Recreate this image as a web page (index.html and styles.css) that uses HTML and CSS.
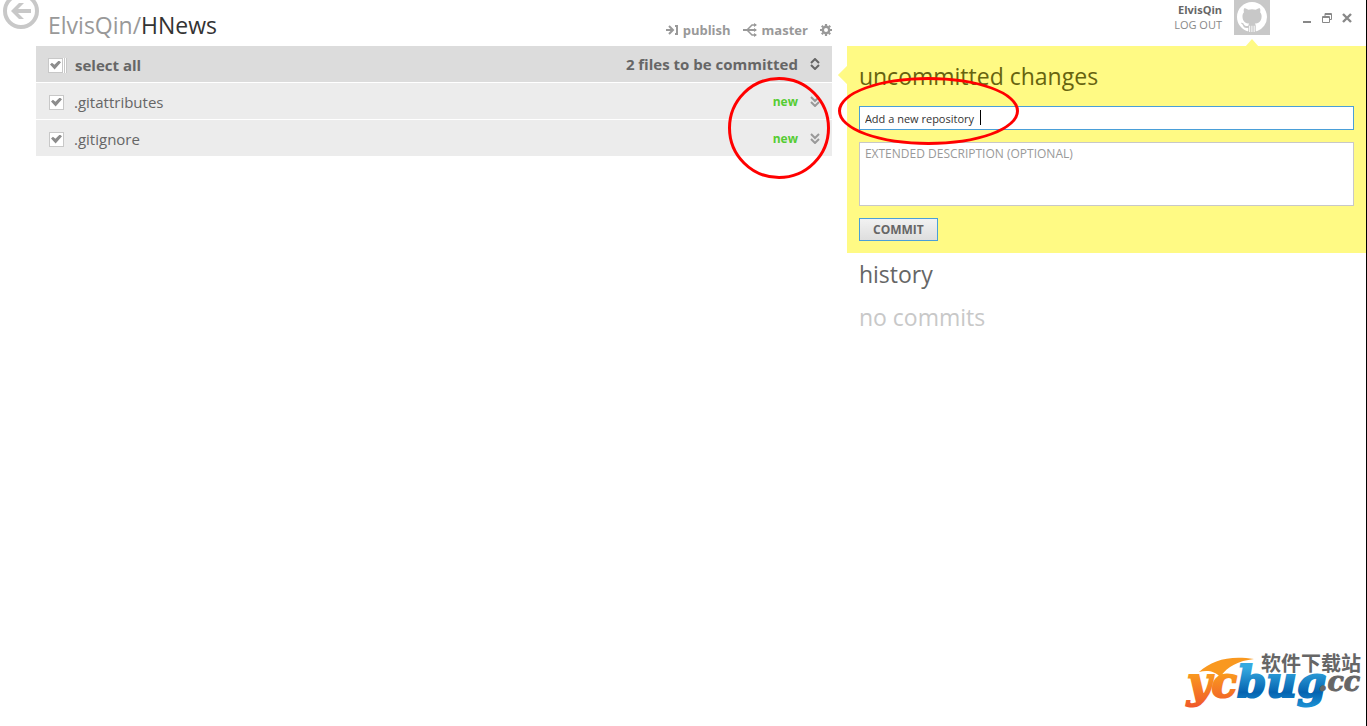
FILE: index.html
```html
<!DOCTYPE html>
<html lang="en">
<head>
    <meta charset="UTF-8">
    <meta name="viewport" content="width=device-width, initial-scale=1.0">
    <title>ElvisQin/HNews</title>
    <link rel="stylesheet" href="styles.css">
</head>
<body>
    <button class="back" aria-label="Back">
        <svg viewBox="0 0 36 36" width="36" height="36">
            <circle cx="18" cy="18" r="16" fill="#fff" stroke="#c8c8c8" stroke-width="4"/>
            <path d="M8 18L16 10H21L15 16H28V20H15L21 26H16Z" fill="#c8c8c8"/>
        </svg>
    </button>

    <div class="window">
        <header class="repo-bar">
            <h1><span class="owner">ElvisQin/</span>HNews</h1>
            <nav class="tools">
                <button>
                    <svg viewBox="0 0 13 12" width="13" height="12" fill="none" stroke="#999" stroke-width="2">
                        <path d="M0 6H7M3 2L7 6L3 10M9 2H11V10H9"/>
                    </svg>
                    publish
                </button>
                <button>
                    <svg viewBox="0 0 15 14" width="15" height="14" fill="none" stroke="#999">
                        <path stroke-width="2" d="M0 7H13"/>
                        <path stroke-width="1.5" d="M4 7L9 2H13M4 7L9 12H13"/>
                        <path fill="#999" stroke="none" d="M11 0l3 2l-3 2zM11 5l3 2l-3 2zM11 10l3 2l-3 2z"/>
                    </svg>
                    master
                </button>
                <button aria-label="Settings">
                    <svg viewBox="0 0 12 12" width="12" height="12" fill="none" stroke="#999">
                        <circle cx="6" cy="6" r="3.2" stroke-width="2.4"/>
                        <path stroke-width="2.2" d="M6 0V2M6 10V12M0 6H2M10 6H12M1.8 1.8L3.2 3.2M8.8 8.8L10.2 10.2M1.8 10.2L3.2 8.8M8.8 3.2L10.2 1.8"/>
                    </svg>
                </button>
            </nav>
        </header>

        <div class="account-bar">
            <div class="account">
                <strong>ElvisQin</strong>
                <a href="#">LOG OUT</a>
            </div>
            <div class="avatar">
                <svg viewBox="0 0 16 16" width="30" height="30" fill="#fff">
                    <path d="M8 0C3.58 0 0 3.58 0 8c0 3.54 2.29 6.53 5.47 7.59.4.07.55-.17.55-.38 0-.19-.01-.82-.01-1.49-2.01.37-2.53-.49-2.69-.94-.09-.23-.48-.94-.82-1.13-.28-.15-.68-.52-.01-.53.63-.01 1.08.58 1.23.82.72 1.21 1.87.87 2.33.66.07-.52.28-.87.51-1.07-1.78-.2-3.64-.89-3.64-3.95 0-.87.31-1.59.82-2.15-.08-.2-.36-1.02.08-2.12 0 0 .67-.21 2.2.82.64-.18 1.32-.27 2-.27s1.36.09 2 .27c1.53-1.04 2.2-.82 2.2-.82.44 1.1.16 1.92.08 2.12.51.56.82 1.27.82 2.15 0 3.07-1.87 3.75-3.65 3.95.29.25.54.73.54 1.48 0 1.07-.01 1.93-.01 2.2 0 .21.15.46.55.38A8.01 8.01 0 0 0 16 8c0-4.42-3.58-8-8-8z"/>
                    <path d="M6.5 12.6h.5V16h-.5zM7.7 12.6h.5V16h-.5zM8.9 12.6h.5V16h-.5z"/>
                </svg>
            </div>
            <div class="window-controls">
                <button aria-label="Minimize">
                    <svg viewBox="0 0 10 12" width="10" height="12"><path d="M1 9H9V11H1Z" fill="#888"/></svg>
                </button>
                <button aria-label="Restore">
                    <svg viewBox="0 0 10 12" width="10" height="12" fill="none" stroke="#888">
                        <path d="M3 4V1.5H9.5V7.5H8M.5 4.5H7.5V10.5H.5ZM3 2.5H9M1 5.5H7"/>
                    </svg>
                </button>
                <button aria-label="Close">
                    <svg viewBox="0 0 10 12" width="10" height="12"><path d="M1 2L9 10M9 2L1 10" stroke="#888" stroke-width="2.4"/></svg>
                </button>
            </div>
        </div>

        <main class="files">
            <div class="row row-head">
                <label><input type="checkbox" class="all" checked>select all</label>
                <span class="count">2 files to be committed</span>
                <button class="toggle" aria-label="Expand all">
                    <svg viewBox="0 0 10 12" width="10" height="12" fill="none" stroke="#666" stroke-width="2">
                        <path d="M1 5L5 1L9 5M1 7L5 11L9 7"/>
                    </svg>
                </button>
            </div>
            <div class="row">
                <label><input type="checkbox" checked>.gitattributes</label>
                <span class="status">new</span>
                <button class="toggle" aria-label="Expand .gitattributes">
                    <svg viewBox="0 0 10 12" width="10" height="12" fill="none" stroke="#999" stroke-width="2">
                        <path d="M1 2L5 6L9 2M1 7L5 11L9 7"/>
                    </svg>
                </button>
            </div>
            <div class="row">
                <label><input type="checkbox" checked>.gitignore</label>
                <span class="status">new</span>
                <button class="toggle" aria-label="Expand .gitignore">
                    <svg viewBox="0 0 10 12" width="10" height="12" fill="none" stroke="#999" stroke-width="2">
                        <path d="M1 2L5 6L9 2M1 7L5 11L9 7"/>
                    </svg>
                </button>
            </div>
            <div class="mark mark-status"></div>
        </main>

        <aside>
            <form class="commit">
                <h2>uncommitted changes</h2>
                <div class="summary">
                    <input type="text" aria-label="Summary" value="Add a new repository">
                    <span class="caret"></span>
                </div>
                <textarea aria-label="Extended description" placeholder="EXTENDED DESCRIPTION (OPTIONAL)"></textarea>
                <button type="button">COMMIT</button>
                <div class="mark mark-summary"></div>
            </form>
            <section class="history">
                <h2>history</h2>
                <p>no commits</p>
            </section>
        </aside>
    </div>

    <svg class="site-logo" viewBox="0 -8 184 66" width="184" height="66">
        <defs>
            <linearGradient id="orange" x1="0" y1="0" x2="0" y2="1">
                <stop offset="0.2" stop-color="#fba51d"/>
                <stop offset="1" stop-color="#f0592a"/>
            </linearGradient>
            <linearGradient id="blue" x1="0" y1="0" x2="0" y2="1">
                <stop offset="0.2" stop-color="#35a9e0"/>
                <stop offset="0.7" stop-color="#0563b0"/>
                <stop offset="1" stop-color="#1c91d4"/>
            </linearGradient>
        </defs>
        <path d="M17 20C30 8 48 3 72 7C56 9 46 14 38 25C33 19 25 18 17 20Z" fill="#f9981f"/>
        <text class="logo-yc" x="5" y="45" fill="url(#orange)" stroke="url(#orange)">yc</text>
        <text class="logo-bug" x="55" y="45" fill="url(#blue)" stroke="url(#blue)">bug</text>
        <text class="logo-cc" x="136" y="39">.cc</text>
        <text class="logo-cn" x="79" y="19">软件下载站</text>
    </svg>
</body>
</html>
```

FILE: styles.css
```css
* {
    box-sizing: border-box;
}
body {
    margin: 0;
    min-height: 100vh;
    position: relative;
    overflow-x: hidden;
    border-right: 1px solid #000;
    background: #fff;
    color: #666;
    font-family: 'Open Sans', 'Noto Sans', sans-serif;
    font-size: 15px;
}
h1, h2, p {
    margin: 0;
    font-weight: normal;
    font-size: 23px;
    line-height: 32px;
}
button {
    padding: 0;
    border: none;
    background: none;
    font-family: inherit;
    cursor: pointer;
}
svg {
    display: block;
}
.back {
    position: absolute;
    left: 3px;
    top: -7px;
}
.window {
    display: grid;
    grid-template-columns: 23fr 15fr;
    grid-template-rows: 46px auto;
    column-gap: 15px;
    padding-left: 36px;
}

/* top bar */
.repo-bar {
    display: flex;
    justify-content: space-between;
    padding: 9px 0 0 12px;
}
.repo-bar h1 {
    color: #333;
}
.owner {
    color: #999;
}
.tools {
    display: flex;
    align-items: center;
    gap: 12px;
    height: 42px;
}
.tools button {
    display: flex;
    align-items: center;
    gap: 4px;
    color: #999;
    font-size: 13px;
    font-weight: bold;
}
.account-bar {
    display: flex;
    justify-content: flex-end;
    align-items: flex-start;
    padding-right: 14px;
}
.account {
    display: flex;
    flex-direction: column;
    align-items: flex-end;
    margin: 2px 12px 0 0;
    font-size: 11px;
    line-height: 15px;
}
.account a {
    color: #888;
    text-decoration: none;
}
.avatar {
    width: 36px;
    height: 35px;
    padding: 2px 3px;
    background: #c8c8c8;
}
.window-controls {
    display: flex;
    gap: 10px;
    margin: 12px 0 0 32px;
}

/* changed files */
.files {
    position: relative;
    align-self: start;
    display: grid;
    gap: 1px;
}
.row {
    display: flex;
    align-items: center;
    height: 36px;
    padding: 0 12px;
    background: #ececec;
}
.row-head {
    background: #dcdcdc;
    font-weight: bold;
}
.row label {
    display: flex;
    align-items: center;
    flex: 1;
    padding-top: 2px;
}
.row input {
    appearance: none;
    width: 15px;
    height: 15px;
    margin: 0 10px 0 1px;
    border: 1px solid #c8c8c8;
    background: #fff;
}
.row input.all {
    margin: 0 12px 0 0;
    box-shadow: 1px 0 #fff, 2px 0 #c8c8c8, 3px 0 #fff, 4px 0 #c8c8c8;
}
.row input:checked::before {
    content: "";
    display: block;
    width: 11px;
    height: 9px;
    margin: 2px 1px;
    background: #8c8c8c;
    clip-path: polygon(0 45%, 18% 25%, 40% 48%, 80% 0, 100% 20%, 42% 100%);
}
.status {
    color: #5c3;
    font-size: 12px;
    font-weight: bold;
}
.toggle {
    margin-left: 12px;
}

/* commit form */
.commit {
    position: relative;
    display: flex;
    flex-direction: column;
    align-items: flex-start;
    gap: 12px;
    padding: 14px 12px 12px;
    background: #fffa84;
}
.commit::before,
.commit::after {
    content: "";
    position: absolute;
    background: #fffa84;
}
.commit::before {
    left: -9px;
    top: 19px;
    width: 10px;
    height: 20px;
    clip-path: polygon(100% 0, 100% 100%, 0 50%);
}
.commit::after {
    right: 107px;
    top: -7px;
    width: 14px;
    height: 8px;
    clip-path: polygon(50% 0, 100% 100%, 0 100%);
}
.commit h2 {
    margin-bottom: 2px;
    color: #66630f;
}
.summary {
    position: relative;
    width: 100%;
}
.summary input,
.commit textarea {
    display: block;
    width: 100%;
    padding: 2px 5px;
    border: 1px solid #c8c8c8;
    border-radius: 0;
    background: #fff;
    color: #333;
    font-family: inherit;
    font-size: 12px;
    outline: none;
    resize: none;
}
.summary input {
    height: 24px;
    border-color: #4a9fd8;
    font-size: 11px;
}
.commit textarea {
    height: 64px;
}
.commit textarea::placeholder {
    color: #999;
}
.caret {
    position: absolute;
    left: 121px;
    top: 4px;
    width: 1px;
    height: 15px;
    background: #000;
}
.commit button {
    width: 79px;
    height: 23px;
    border: 1px solid #4a9fd8;
    background: linear-gradient(#f2f2f2, #dedede);
    color: #666;
    font-size: 12px;
    font-weight: bold;
}
.history {
    padding: 5px 12px;
}
.history p {
    margin-top: 11px;
    color: #c8c8c8;
}

/* hand-drawn highlights */
.mark {
    position: absolute;
    border: 3px solid #f00;
    border-radius: 50%;
    pointer-events: none;
}
.mark-status {
    right: 2px;
    top: 31px;
    width: 102px;
    height: 102px;
}
.mark-summary {
    left: -9px;
    top: 31px;
    width: 181px;
    height: 68px;
    z-index: 1;
}

.site-logo {
    position: absolute;
    right: 0;
    bottom: 16px;
}
.site-logo text {
    font-family: 'DejaVu Serif', serif;
    font-style: italic;
    font-weight: bold;
}
.site-logo .logo-yc {
    font-size: 42px;
    stroke-width: 2px;
}
.site-logo .logo-bug {
    font-size: 42px;
    stroke-width: 2px;
}
.site-logo .logo-cc {
    font-size: 27px;
    fill: #666;
    stroke: #666;
}
.site-logo .logo-cn {
    font-family: 'Noto Sans CJK SC', sans-serif;
    font-size: 20px;
    font-style: normal;
    fill: #666;
}
```
